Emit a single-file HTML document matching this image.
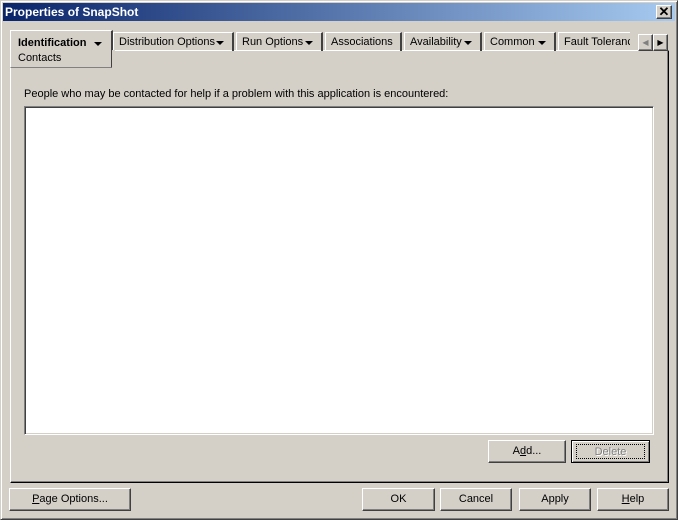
<!DOCTYPE html><html><head><style>
*{margin:0;padding:0;box-sizing:border-box}
body{width:678px;height:520px;background:#d4d0c8;font:11px "Liberation Sans",sans-serif;color:#000;position:relative;overflow:hidden}
.a{position:absolute}
.win{left:0;top:0;width:678px;height:520px;border:1px solid;border-color:#d4d0c8 #404040 #404040 #d4d0c8;box-shadow:inset 1px 1px #fff,inset -1px -1px #808080}
.title{left:3px;top:3px;width:672px;height:18px;background:linear-gradient(90deg,#0a246a,#a6caf0);color:#fff;font-weight:bold;font-size:12px;line-height:19px;padding-left:2px}
.btn{position:absolute;border:1px solid;border-color:#fff #404040 #404040 #fff;box-shadow:inset -1px -1px #808080;text-align:center;line-height:21px;background:#d4d0c8}
.tab{position:absolute;top:32px;height:19px;border-top:1px solid #fff;border-left:1px solid #fff;border-right:2px solid #404040;line-height:19px;padding-left:5px;white-space:nowrap;overflow:hidden}
.dd{position:absolute;right:8px;top:8px;width:0;height:0;border-left:4px solid transparent;border-right:4px solid transparent;border-top:4px solid #000}
u{text-decoration:underline}
</style></head><body>
<div class="a win"></div>
<div class="a title">Properties of SnapShot</div>
<div class="btn" style="left:656px;top:5px;width:16px;height:14px;line-height:12px;font-size:13px;font-weight:bold">✕</div>
<div class="a" style="left:10px;top:50px;width:659px;height:433px;border:1px solid;border-color:#fff #000 #000 #fff;box-shadow:inset -1px -1px #808080"></div>
<div class="tab" style="left:113px;width:121px">Distribution Options<span class="dd"></span></div>
<div class="tab" style="left:236px;width:87px">Run Options<span class="dd"></span></div>
<div class="tab" style="left:325px;width:77px">Associations</div>
<div class="tab" style="left:404px;width:78px">Availability<span class="dd"></span></div>
<div class="tab" style="left:484px;width:72px">Common<span class="dd"></span></div>
<div class="tab" style="left:558px;width:72px;border-right:none">Fault Toleranc</div>
<div class="a" style="left:10px;top:30px;width:103px;height:38px;background:#d4d0c8;border-top:1px solid #fff;border-left:1px solid #fff;border-right:2px solid #404040;border-bottom:1px solid #808080;padding:5px 0 0 7px;line-height:15px"><b>Identification</b><span class="dd" style="top:11px;right:9px"></span><br>Contacts</div>
<div class="a" style="left:112px;top:50px;width:3px;height:19px;background:#d4d0c8"></div>
<div class="btn" style="left:638px;top:34px;width:15px;height:17px;line-height:15px;font-size:8px;color:#808080">◀</div>
<div class="btn" style="left:653px;top:34px;width:15px;height:17px;line-height:15px;font-size:8px">▶</div>
<div class="a" style="left:24px;top:88px">People who may be contacted for help if a problem with this application is encountered:</div>
<div class="a" style="left:24px;top:106px;width:630px;height:329px;background:#fff;border:1px solid;border-color:#808080 #fff #fff #808080;box-shadow:inset 1px 1px #404040,inset -1px -1px #d4d0c8"></div>
<div class="btn" style="left:488px;top:440px;width:78px;height:23px">A<u>d</u>d...</div>
<div class="btn" style="left:571px;top:440px;width:79px;height:23px;border-color:#000;box-shadow:inset 1px 1px #fff,inset -1px -1px #808080;color:#808080;text-shadow:1px 1px #fff"><span style="border:1px dotted #000;display:inline-block;width:69px;height:15px;line-height:14px;margin-top:3px">Delete</span></div>
<div class="btn" style="left:9px;top:488px;width:122px;height:23px"><u>P</u>age Options...</div>
<div class="btn" style="left:362px;top:488px;width:73px;height:23px">OK</div>
<div class="btn" style="left:440px;top:488px;width:72px;height:23px">Cancel</div>
<div class="btn" style="left:519px;top:488px;width:72px;height:23px">Apply</div>
<div class="btn" style="left:597px;top:488px;width:72px;height:23px"><u>H</u>elp</div>
</body></html>
